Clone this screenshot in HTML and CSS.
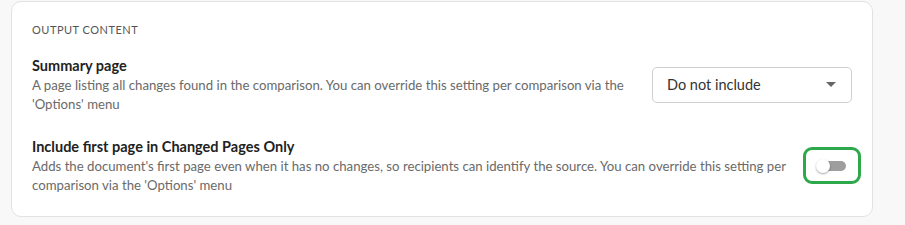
FILE: index.html
```html
<!DOCTYPE html>
<html lang="en">
<head>
  <meta charset="utf-8">
  <meta name="viewport" content="width=device-width, initial-scale=1">
  <title>Output content</title>
  <link rel="stylesheet" href="styles.css">
</head>
<body>
  <section class="card">
    <h2 class="section-title">OUTPUT CONTENT</h2>

    <div class="setting">
      <div class="setting-text">
        <div class="setting-name">Summary page</div>
        <p class="setting-desc">A page listing all changes found in the comparison. You can override this setting per comparison via the 'Options' menu</p>
      </div>
      <div class="select">
        <span>Do not include</span>
        <span class="caret"></span>
      </div>
    </div>

    <div class="setting">
      <div class="setting-text">
        <div class="setting-name">Include first page in Changed Pages Only</div>
        <p class="setting-desc">Adds the document's first page even when it has no changes, so recipients can identify the source. You can override this setting per comparison via the 'Options' menu</p>
      </div>
      <div class="switch-wrap">
        <div class="switch">
          <span class="track"></span>
          <span class="knob"></span>
        </div>
      </div>
    </div>
  </section>
</body>
</html>
```

FILE: styles.css
```css
body {
  margin: 0;
  padding: 1px 32px 0 11px;
  background: #f8f8f8;
  font-family: Lato, "Open Sans", sans-serif;
  color: #222;
}

.card {
  background: #fff;
  border: 1px solid #e2e2e2;
  border-radius: 10px;
  padding: 20px 20px 0 20px;
  box-sizing: border-box;
  height: 216px;
}

.section-title {
  margin: 0 0 18px 0;
  font-size: 11px;
  line-height: 16px;
  font-weight: 400;
  letter-spacing: 0.5px;
  color: #555;
}

.setting {
  display: flex;
  align-items: center;
  gap: 14px;
  margin-bottom: 24px;
}

.setting-text {
  flex: 1;
}

.setting-name {
  font-size: 14.5px;
  line-height: 20px;
  font-weight: 700;
  color: #222;
}

.setting-desc {
  margin: 0;
  font-size: 13.2px;
  line-height: 18.5px;
  color: #6a6a6a;
}

.select {
  width: 200px;
  height: 36px;
  box-sizing: border-box;
  border: 1px solid #cfcfcf;
  border-radius: 5px;
  padding: 0 14px;
  display: flex;
  align-items: center;
  justify-content: space-between;
  font-size: 14.5px;
  color: #333;
}

.caret {
  width: 0;
  height: 0;
  border-left: 5px solid transparent;
  border-right: 5px solid transparent;
  border-top: 5px solid #666;
  margin-right: 1px;
}

.switch-wrap {
  width: 58px;
  height: 37px;
  box-sizing: border-box;
  border: 3px solid #2fa84b;
  border-radius: 9px;
  margin-right: -9px;
  display: flex;
  align-items: center;
  justify-content: center;
}

.switch {
  position: relative;
  width: 32px;
  height: 14px;
}

.track {
  position: absolute;
  left: 4px;
  right: 2px;
  top: 2px;
  bottom: 2px;
  border-radius: 5px;
  background: #9e9e9e;
}

.knob {
  position: absolute;
  left: 0;
  top: 0;
  width: 14px;
  height: 14px;
  border-radius: 50%;
  background: #fff;
  box-shadow: 0 1px 2px rgba(0, 0, 0, 0.35);
}
```
